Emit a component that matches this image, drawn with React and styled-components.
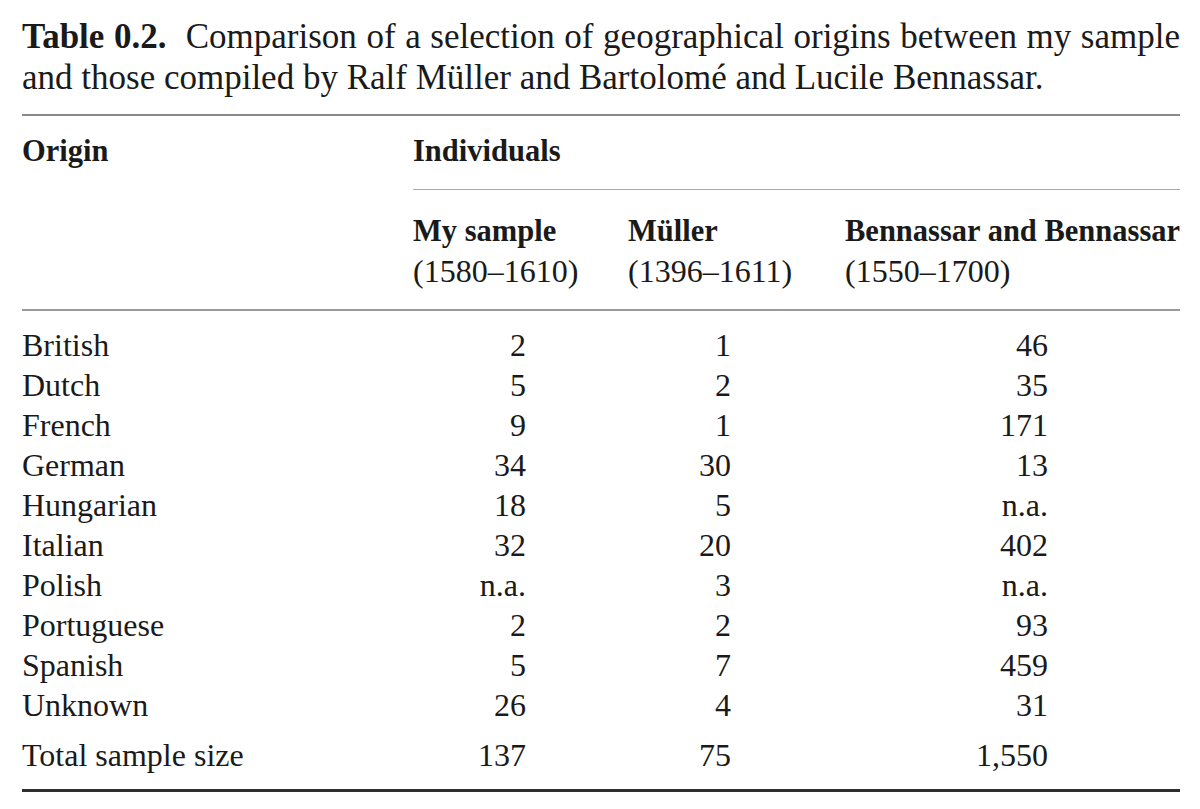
import React from 'react';
import styled, { createGlobalStyle } from 'styled-components';

const GlobalStyle = createGlobalStyle`
  body {
    margin: 0;
    background: #ffffff;
    color: #1a1a1a;
    font-family: 'Liberation Serif', 'Times New Roman', serif;
  }
`;

const rows = [
  ['British', '2', '1', '46'],
  ['Dutch', '5', '2', '35'],
  ['French', '9', '1', '171'],
  ['German', '34', '30', '13'],
  ['Hungarian', '18', '5', 'n.a.'],
  ['Italian', '32', '20', '402'],
  ['Polish', 'n.a.', '3', 'n.a.'],
  ['Portuguese', '2', '2', '93'],
  ['Spanish', '5', '7', '459'],
  ['Unknown', '26', '4', '31'],
];

const total = ['Total sample size', '137', '75', '1,550'];

// right edge of each number column, measured from the column start
const numWidths = [113, 103, 203];

function App() {
  return (
    <>
      <GlobalStyle />
      <Page>
        <Caption>
          <CaptionLine $justify>
            <Label>Table 0.2.</Label>&nbsp; Comparison of a selection of geographical origins between my sample
          </CaptionLine>
          <CaptionLine>and those compiled by Ralf Müller and Bartolomé and Lucile Bennassar.</CaptionLine>
        </Caption>

        <Rule $size={2} $color='#8a8a8a' />

        <Head>
          <HeadCell>Origin</HeadCell>
          <Spanner>
            <HeadCell>Individuals</HeadCell>
            <SubRule />
            <SubHeads>
              <HeadCell>
                My sample
                <br />
                <Years>(1580–1610)</Years>
              </HeadCell>
              <HeadCell>
                Müller
                <br />
                <Years>(1396–1611)</Years>
              </HeadCell>
              <HeadCell>
                Bennassar and Bennassar
                <br />
                <Years>(1550–1700)</Years>
              </HeadCell>
            </SubHeads>
          </Spanner>
        </Head>

        <Rule $size={2} $color='#9a9a9a' />

        <Body>
          {rows.map((row) => (
            <Row key={row[0]}>
              <Name>{row[0]}</Name>
              {row.slice(1).map((v, i) => (
                <Cell key={i}>
                  <Num $width={numWidths[i]}>{v}</Num>
                </Cell>
              ))}
            </Row>
          ))}
          <Row $total>
            <Name>{total[0]}</Name>
            {total.slice(1).map((v, i) => (
              <Cell key={i}>
                <Num $width={numWidths[i]}>{v}</Num>
              </Cell>
            ))}
          </Row>
        </Body>

        <Rule $size={3} $color='#2e2e2e' />
      </Page>
    </>
  );
}

export default App;

const Page = styled.div`
  width: 1158px;
  padding: 16px 20px 0 22px;
  font-size: 32px;
`;

const Caption = styled.div`
  font-size: 35px;
  line-height: 41px;
  margin-bottom: 16px;
`;

const CaptionLine = styled.div`
  text-align: ${(p) => (p.$justify ? 'justify' : 'left')};
  text-align-last: ${(p) => (p.$justify ? 'justify' : 'left')};
  white-space: ${(p) => (p.$justify ? 'normal' : 'nowrap')};
`;

const Label = styled.span`
  font-weight: bold;
`;

const Rule = styled.div`
  height: ${(p) => p.$size}px;
  background: ${(p) => p.$color};
`;

const Head = styled.div`
  display: grid;
  grid-template-columns: 391px 1fr;
  padding: 15px 0 17px;
`;

const HeadCell = styled.div`
  font-weight: bold;
  font-size: 30.5px;
  line-height: 40px;
  white-space: nowrap;
`;

const Years = styled.span`
  font-weight: normal;
  font-size: 32px;
`;

const Spanner = styled.div`
  display: flex;
  flex-direction: column;
`;

const SubRule = styled.div`
  height: 1px;
  background: #a8a8a8;
  margin: 18px 0 21px;
`;

const SubHeads = styled.div`
  display: grid;
  grid-template-columns: 215px 217px 1fr;
`;

const Body = styled.div`
  padding: 14px 0 14px;
`;

const Row = styled.div`
  display: grid;
  grid-template-columns: 391px 215px 217px 1fr;
  line-height: 40px;
  margin-top: ${(p) => (p.$total ? '10px' : '0')};
`;

const Name = styled.div`
  white-space: nowrap;
`;

const Cell = styled.div`
  display: flex;
`;

const Num = styled.div`
  width: ${(p) => p.$width}px;
  text-align: right;
`;
